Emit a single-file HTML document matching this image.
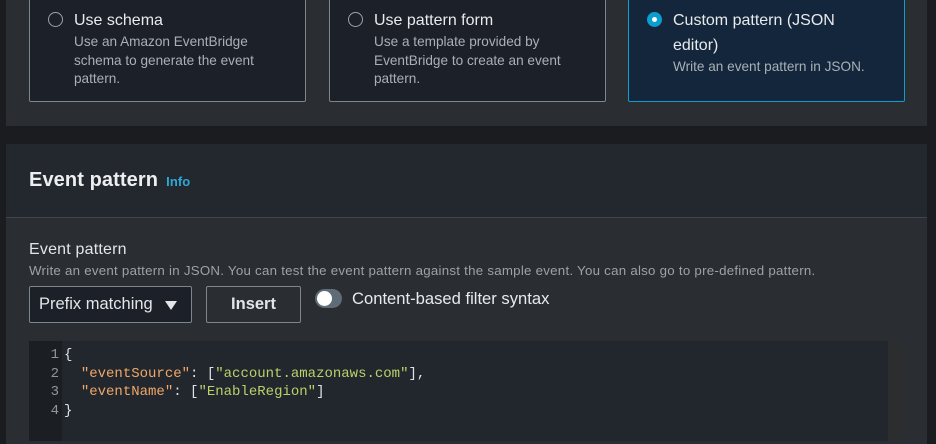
<!DOCTYPE html>
<html><head><style>
*{box-sizing:border-box;margin:0;padding:0}
body{width:936px;height:430px;overflow:hidden;background:#1a1c20;font-family:"Liberation Sans",sans-serif;position:relative}
.card1{position:absolute;left:6px;top:-10px;width:921px;height:136px;background:#2a2d32}
.box{position:absolute;top:0;height:112px;width:277px;background:#1b2029;border:1px solid #7d858d;border-radius:2px}
.box.sel{background:#13263b;border-color:#0a9fce}
.radio{position:absolute;left:18px;top:21px;width:15px;height:15px;border:1.5px solid #9aa3ab;border-radius:50%}
.sel .radio{background:#0a9fce;border-color:#0a9fce}
.sel .radio:after{content:"";position:absolute;left:3.5px;top:3.5px;width:5px;height:5px;background:#fff;border-radius:50%}
.bt{position:absolute;left:44px;top:17px;font-size:16px;color:#e8eaec;line-height:25px}
.bd{font-size:13.6px;color:#a9b0b7;line-height:18.5px}
.card2{position:absolute;left:6px;top:144px;width:921px;height:300px;background:#2a2d32}
.hdr{height:74px;background:#23272e;border-bottom:1px solid #3f454d;position:relative}
.h{position:absolute;left:23px;top:25px;font-size:20px;font-weight:bold;color:#eceef0;letter-spacing:0.1px}
.h span{font-size:13px;color:#2ea8d4;margin-left:8px}
.lbl{position:absolute;left:29px;top:241px;font-size:16px;color:#e3e5e7;letter-spacing:0.2px}
.desc{position:absolute;left:29px;top:263px;font-size:13.3px;color:#9ba2a9;letter-spacing:0.25px}
.sel2{position:absolute;left:29px;top:286px;width:163px;height:37px;background:#1b2029;border:1px solid #7d858d;border-radius:2px;color:#e3e5e7;font-size:16.5px;padding:8px 0 0 9px}
.sel2 i{position:absolute;right:14px;top:14px;border-left:6px solid transparent;border-right:6px solid transparent;border-top:9px solid #e3e5e7}
.ins{position:absolute;left:206px;top:286px;width:95px;height:37px;border:1px solid #7d858d;border-radius:2px;color:#e3e5e7;font-size:16.5px;font-weight:bold;text-align:center;padding-top:8px}
.tog{position:absolute;left:315px;top:289px;width:27px;height:19px;background:#5f6b77;border-radius:10px}
.tog:after{content:"";position:absolute;left:2px;top:2px;width:15px;height:15px;background:#fff;border-radius:50%}
.tl{position:absolute;left:352px;top:289px;font-size:16.6px;color:#e8eaec}
.ed{position:absolute;left:29px;top:341px;width:876px;height:100px;background:#22262d}
.gut{position:absolute;left:0;top:0;width:33px;height:100%;background:#1b1e23}
.sb{position:absolute;right:0;top:0;width:17px;height:100%;background:#2c2d2f}
.code{position:absolute;top:5px;font-family:"Liberation Mono",monospace;font-size:14px;line-height:18.5px;white-space:pre}
.ln{left:0;width:30px;text-align:right;color:#8f969d}
.tx{left:35px;color:#dfe2e5}
.k{color:#f0a868}.s{color:#b8d36a}
</style></head><body>
<div class="card1">
<div class="box" style="left:23px"><div class="radio"></div><div class="bt">Use schema<div class="bd">Use an Amazon EventBridge<br>schema to generate the event<br>pattern.</div></div></div>
<div class="box" style="left:323px"><div class="radio"></div><div class="bt">Use pattern form<div class="bd">Use a template provided by<br>EventBridge to create an event<br>pattern.</div></div></div>
<div class="box sel" style="left:622px"><div class="radio"></div><div class="bt">Custom pattern (JSON<br>editor)<div class="bd">Write an event pattern in JSON.</div></div></div>
</div>
<div class="card2"><div class="hdr"><div class="h">Event pattern<span>Info</span></div></div></div>
<div class="lbl">Event pattern</div>
<div class="desc">Write an event pattern in JSON. You can test the event pattern against the sample event. You can also go to pre-defined pattern.</div>
<div class="sel2">Prefix matching<i></i></div>
<div class="ins">Insert</div>
<div class="tog"></div><div class="tl">Content-based filter syntax</div>
<div class="ed"><div class="gut"></div><div class="sb"></div>
<div class="code ln">1
2
3
4</div>
<div class="code tx">{
  <span class="k">"eventSource"</span>: [<span class="s">"account.amazonaws.com"</span>],
  <span class="k">"eventName"</span>: [<span class="s">"EnableRegion"</span>]
}</div></div>
</body></html>
